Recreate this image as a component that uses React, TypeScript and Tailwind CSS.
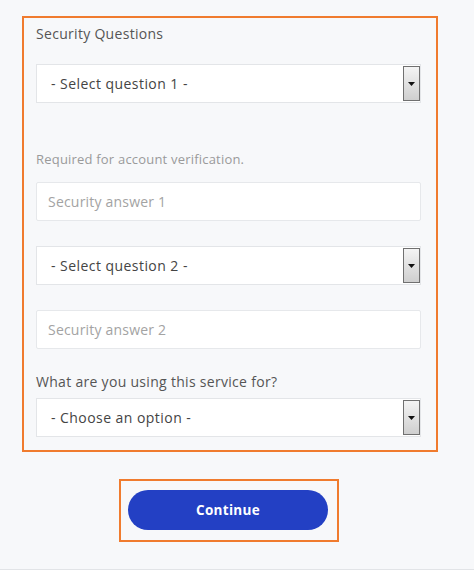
import React from 'react';

const font = { fontFamily: '"Open Sans", "Liberation Sans", sans-serif' };

function SelectBox({ label }: { label: string }) {
  return (
    <div className="relative flex items-center h-[39px] w-[385px] bg-white border border-[#e3e5e8]">
      <span className="pl-[14px] text-[14px] font-medium text-[#444] tracking-[0.45px]">{label}</span>
      <div className="absolute right-0 top-[1px] bottom-[1px] w-[17px] border border-[#707070] bg-gradient-to-b from-[#f4f4f4] to-[#cfcfcf] flex items-center justify-center">
        <svg width="7" height="4" viewBox="0 0 7 4">
          <path d="M0 0h7L3.5 4z" fill="#111" />
        </svg>
      </div>
    </div>
  );
}

function TextBox({ placeholder }: { placeholder: string }) {
  return (
    <div className="flex items-center h-[39px] w-[385px] bg-white border border-[#e6e8eb] rounded-[2px]">
      <span className="pl-[11px] text-[14px] text-[#a3a3a3] tracking-[0.2px]">{placeholder}</span>
    </div>
  );
}

export default function App() {
  return (
    <div className="w-[474px] h-[570px] bg-[#f7f8fa] border-b border-[#e2e4e7]" style={font}>
      <div className="h-[16px]" />
      <div className="ml-[22px] w-[416px] border-2 border-[#f07b2e] pl-[12px] pt-[6px] pb-[13px]">
        <p className="h-[20px] leading-[20px] text-[14px] text-[#555] tracking-[0.3px]">Security Questions</p>
        <div className="mt-[20px]">
          <SelectBox label="- Select question 1 -" />
        </div>
        <p className="mt-[47px] h-[18px] leading-[18px] text-[13px] text-[#9a9a9a] tracking-[0.2px]">
          Required for account verification.
        </p>
        <div className="mt-[14px]">
          <TextBox placeholder="Security answer 1" />
        </div>
        <div className="mt-[25px]">
          <SelectBox label="- Select question 2 -" />
        </div>
        <div className="mt-[25px]">
          <TextBox placeholder="Security answer 2" />
        </div>
        <p className="mt-[23px] h-[20px] leading-[20px] text-[14px] text-[#555] tracking-[0.3px]">
          What are you using this service for?
        </p>
        <div className="mt-[6px]">
          <SelectBox label="- Choose an option -" />
        </div>
      </div>
      <div className="mt-[27px] ml-[119px] w-[220px] h-[63px] border-2 border-[#f07b2e] pl-[7px] pt-[9px]">
        <button className="w-[200px] h-[40px] rounded-full bg-[#2340c4] text-white text-[13.5px] font-bold tracking-[0.3px]">
          Continue
        </button>
      </div>
    </div>
  );
}
